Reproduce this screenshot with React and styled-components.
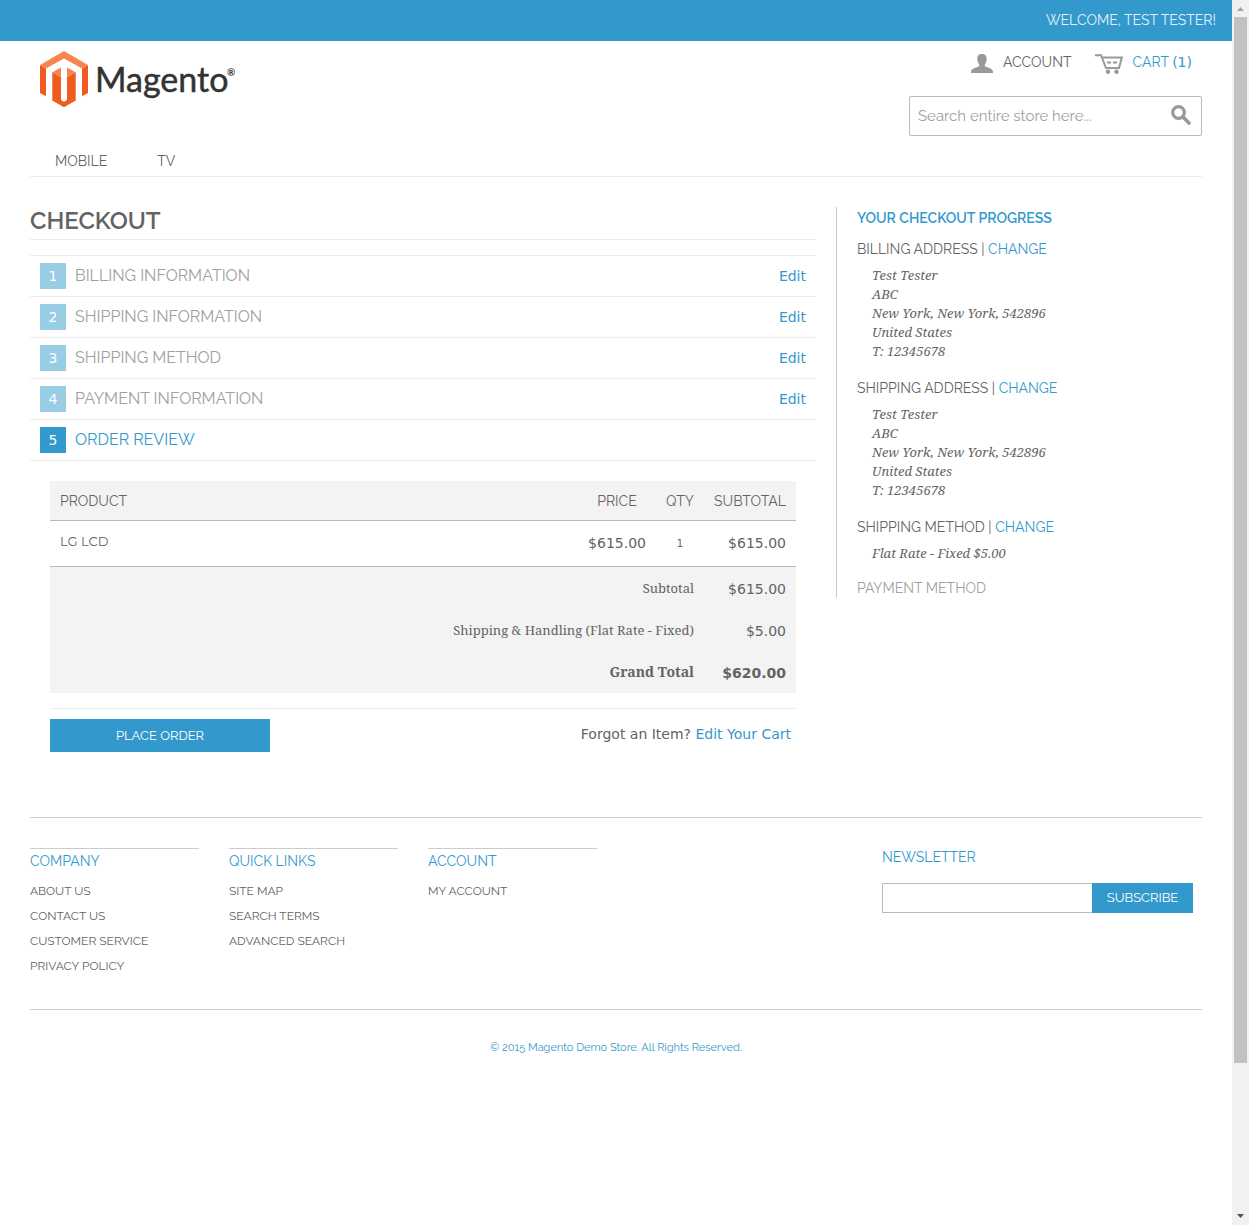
import React from "react";
import styled, { createGlobalStyle, css } from "styled-components";

const blue = "#3399cc";
const text = "#636363";
const muted = "#a0a0a0";
const rule = "#ededed";
const line = "#cccccc";
const strong = "#bbbbbb";

const display = `Raleway, Lato, sans-serif`;
const sans = `Verdana, "DejaVu Sans", sans-serif`;
const serif = `Georgia, "Noto Serif", "Liberation Serif", serif`;

const GlobalStyle = createGlobalStyle`
  *, *::before, *::after { box-sizing: border-box; }
  html { scrollbar-width: none; }
  body {
    margin: 0;
    background: #fff;
    color: ${text};
    font: 14px/20px ${display};
  }
  h1, h2, h3, h4, p, dl, dd, ol, ul, address { margin: 0; padding: 0; }
  ol, ul { list-style: none; }
  button, input { font: inherit; border-radius: 0; margin: 0; }
`;

const Window = styled.div`
  display: flex;
  min-height: 100vh;
`;

const Page = styled.div`
  flex: 1;
  min-width: 0;
`;

const ScrollTrack = styled.div`
  flex: 0 0 17px;
  height: 100vh;
  background: #f1f1f1;
  display: flex;
  flex-direction: column;
  align-items: center;
`;

const ScrollArrow = styled.svg`
  flex: 0 0 17px;
  width: 17px;
`;

const ScrollThumb = styled.div`
  flex: 36;
  width: 13px;
  background: #c1c1c1;
`;

const ScrollRest = styled.div`
  flex: 5;
`;

const WelcomeBar = styled.div`
  background: ${blue};
  color: #e6f1f8;
  text-align: right;
  text-transform: uppercase;
  padding: 10px 16px 11px;
`;

const Container = styled.div`
  padding: 0 30px;
`;

const Header = styled.header`
  display: flex;
  justify-content: space-between;
  align-items: flex-start;
  padding: 10px 0 0 10px;
  height: 105px;
`;

const LogoLink = styled.a`
  display: block;
  line-height: 0;
`;

const HeaderTools = styled.div`
  width: 293px;
  display: flex;
  flex-direction: column;
  gap: 23px;
`;

const AccountLinks = styled.nav`
  display: flex;
  justify-content: flex-end;
  gap: 24px;
  padding-right: 10px;
`;

const IconLink = styled.a`
  display: flex;
  align-items: center;
  gap: ${(p) => (p.$accent ? 9 : 10)}px;
  height: 22px;
  color: ${(p) => (p.$accent ? blue : text)};
  text-transform: uppercase;
  text-decoration: none;
  svg { margin-top: 3px; }
`;

const Count = styled.span`
  font-family: ${sans};
`;

const SearchForm = styled.form`
  display: flex;
  align-items: center;
  height: 40px;
  border: 1px solid ${strong};
  border-radius: 2px;
`;

const SearchInput = styled.input`
  flex: 1;
  min-width: 0;
  height: 38px;
  padding: 0 8px;
  border: 0;
  outline: 0;
  background: transparent;
  font-size: 15px;
  color: ${text};
  &::placeholder { color: #a0a0a0; opacity: 1; }
`;

const SearchButton = styled.button`
  width: 40px;
  height: 38px;
  padding: 0 0 2px;
  border: 0;
  background: transparent;
  line-height: 0;
`;

const MainNav = styled.nav`
  display: flex;
  gap: 50px;
  padding: 5px 25px;
  border-bottom: 1px solid ${rule};
`;

const NavLink = styled.a`
  color: ${text};
  text-transform: uppercase;
  text-decoration: none;
`;

const Content = styled.div`
  display: flex;
  align-items: flex-start;
  gap: 20px;
  padding-top: 30px;
`;

const Main = styled.main`
  flex: 1;
  min-width: 0;
`;

const PageTitle = styled.h1`
  font-size: 24px;
  line-height: 28px;
  font-weight: 600;
  text-transform: uppercase;
  padding-bottom: 4px;
  border-bottom: 1px solid ${rule};
  margin-bottom: 15px;
`;

const Steps = styled.ol`
  border-top: 1px solid ${rule};
`;

const StepHead = styled.div`
  display: flex;
  align-items: center;
  gap: 9px;
  height: 41px;
  padding: 0 10px;
  border-bottom: 1px solid ${rule};
`;

const StepNumber = styled.span`
  width: 26px;
  height: 26px;
  background: ${(p) => (p.$active ? blue : "#99cce5")};
  color: #fff;
  font: 14px/26px ${sans};
  text-align: center;
`;

const StepTitle = styled.h2`
  flex: 1;
  font-size: 16px;
  font-weight: 400;
  text-transform: uppercase;
  color: ${(p) => (p.$active ? blue : muted)};
`;

const TextLink = styled.a`
  color: ${blue};
  text-decoration: none;
`;

const EditLink = styled(TextLink)`
  font-family: ${sans};
`;

const Review = styled.section`
  padding: 20px;
`;

const Table = styled.table`
  width: 100%;
  border-collapse: separate;
  border-spacing: 0;
`;

const HeadCell = styled.th`
  height: 40px;
  padding: 0 10px;
  background: #f3f3f3;
  border-bottom: 1px solid ${strong};
  font-weight: 400;
  text-transform: uppercase;
  text-align: ${(p) => p.$align || "left"};
  width: ${(p) => p.$width || "auto"};
`;

const BodyCell = styled.td`
  height: 46px;
  padding: 0 10px 2px;
  border-bottom: 1px solid ${strong};
  text-align: ${(p) => p.$align || "left"};
  font-family: ${sans};
`;

const ProductName = styled.h3`
  padding-bottom: 4px;
  font: 400 13px/20px Montserrat, "Open Sans", sans-serif;
  text-transform: uppercase;
`;

const Quantity = styled.span`
  font-size: 10px;
`;

const totalCell = css`
  height: 42px;
  background: #f3f3f3;
  text-align: right;
  font-weight: ${(p) => (p.$grand ? 700 : 400)};
`;

const TotalLabel = styled.th`
  ${totalCell}
  padding: 0 10px;
  font-family: ${serif};
  font-size: ${(p) => (p.$grand ? 14 : 13)}px;
`;

const TotalValue = styled.td`
  ${totalCell}
  padding: 2px 10px 0;
  font-family: ${sans};
`;

const Actions = styled.div`
  display: flex;
  justify-content: space-between;
  align-items: flex-start;
  margin-top: 15px;
  padding-top: 10px;
  border-top: 1px solid ${rule};
`;

const Button = styled.button`
  border: 0;
  background: ${blue};
  color: #fff;
  text-transform: uppercase;
  font-size: 13px;
  width: ${(p) => p.$width}px;
  height: ${(p) => p.$height}px;
  padding: 0;
`;

const Forgot = styled.p`
  padding: 5px 5px 0 0;
  font-family: ${sans};
`;

const Sidebar = styled.aside`
  width: 366px;
  border-left: 1px solid ${line};
  padding-left: 20px;
`;

const SideTitle = styled.h2`
  font-size: 14px;
  line-height: 22px;
  font-weight: 600;
  color: ${blue};
  text-transform: uppercase;
  margin-bottom: 10px;
`;

const Progress = styled.dl`
  display: flex;
  flex-direction: column;
`;

const ProgressTerm = styled.dt`
  text-transform: uppercase;
  color: ${(p) => (p.$pending ? muted : text)};
`;

const ProgressDetail = styled.dd`
  padding: 7px 0 15px 15px;
  font: italic 13px/19px ${serif};
`;

const Address = styled.address`
  font-style: italic;
  padding-bottom: 2px;
`;

const Footer = styled.footer`
  margin-top: 45px;
  border-top: 1px solid ${line};
`;

const FooterTop = styled.div`
  display: flex;
  justify-content: space-between;
  padding: 30px 0;
  border-bottom: 1px solid ${line};
`;

const FooterColumns = styled.div`
  display: flex;
  gap: 30px;
`;

const FooterColumn = styled.div`
  width: 169px;
  border-top: 1px solid ${line};
`;

const FooterTitle = styled.h4`
  font-size: 14px;
  line-height: 24px;
  font-weight: 400;
  color: ${blue};
  text-transform: uppercase;
  margin-bottom: 6px;
`;

const FooterLink = styled.a`
  display: block;
  font-size: 12px;
  line-height: 25px;
  color: ${text};
  text-transform: uppercase;
  text-decoration: none;
`;

const Newsletter = styled.form`
  width: 320px;
  padding-right: 9px;
`;

const NewsletterLabel = styled.label`
  display: block;
  line-height: 18px;
  color: ${blue};
  text-transform: uppercase;
  margin-bottom: 17px;
`;

const NewsletterRow = styled.div`
  display: flex;
`;

const NewsletterInput = styled.input`
  flex: 1;
  min-width: 0;
  height: 30px;
  border: 1px solid ${strong};
  border-right: 0;
  padding: 0 8px;
`;

const Copyright = styled.p`
  padding: 28px 0;
  font-size: 11px;
  text-align: center;
  color: ${blue};
`;

const Logo = () => (
  <svg width="200" height="58" viewBox="0 0 200 58" role="img" aria-label="Magento">
    <path fill="#f15b22" d="M0 14 6 17.500V45.300L0 42ZM48 14 42 17.500V45.300L48 42ZM12.300 21.300 21 26V49L24 51 27 49V26L35.700 21.300V49.500L24 56.300 12.300 49.500Z" />
    <path fill="#f68650" d="M24 0 48 14 42 17.500 24 7.500 6 17.500 0 14ZM12.300 21.300 21 16.400V26ZM35.700 21.300 27 16.400V26Z" />
    <text x="55" y="41" fontFamily="Lato" fontSize="34" fill="#333" stroke="#333" strokeWidth=".5">Magento</text>
    <text x="187" y="25" fontFamily="Lato" fontWeight="700" fontSize="10" fill="#333">®</text>
  </svg>
);

const AccountIcon = () => (
  <svg width="22" height="19" viewBox="0 0 22 19" aria-hidden="true">
    <path fill="#999" d="M11 0c3.300 0 5 2 4.700 5.200C15.500 8 14.600 9.500 13.800 10.500v1.500c1.200 1.600 8.200 2 8.200 5.800V19H0v-1.200c0-3.800 7-4.200 8.200-5.800v-1.500C7.400 9.500 6.500 8 6.300 5.200 6 2 7.700 0 11 0Z" />
  </svg>
);

const CartIcon = () => (
  <svg width="28" height="20" viewBox="0 0 28 20" aria-hidden="true">
    <path d="M0 1.200H6L11 14H24L26.800 3.500H7.500" fill="none" stroke="#999" strokeWidth="2" />
    <path d="M12 8.500h4m2 0h4" stroke="#999" strokeWidth="2" />
    <circle cx="13" cy="17.700" r="2.200" fill="#999" />
    <circle cx="21.500" cy="17.700" r="2.200" fill="#999" />
  </svg>
);

const SearchIcon = () => (
  <svg width="20" height="20" viewBox="0 0 20 20" aria-hidden="true">
    <circle cx="7.500" cy="7.500" r="5.800" fill="none" stroke="#999" strokeWidth="3.200" />
    <path d="m12 12 6 6" stroke="#999" strokeWidth="3.600" strokeLinecap="round" />
  </svg>
);

const steps = [
  "Billing Information",
  "Shipping Information",
  "Shipping Method",
  "Payment Information",
  "Order Review",
];

const totals = [
  ["Subtotal", "$615.00"],
  ["Shipping & Handling (Flat Rate - Fixed)", "$5.00"],
  ["Grand Total", "$620.00"],
];

const addressLines = ["Test Tester", "ABC", "New York, New York, 542896", "United States", "T: 12345678"];

const footerColumns = [
  ["Company", ["About Us", "Contact Us", "Customer Service", "Privacy Policy"]],
  ["Quick Links", ["Site Map", "Search Terms", "Advanced Search"]],
  ["Account", ["My Account"]],
];

const AddressBlock = () => (
  <Address>
    {addressLines.map((l) => (
      <div key={l}>{l}</div>
    ))}
  </Address>
);

const ProgressHeading = ({ children }) => (
  <ProgressTerm>
    {children} | <TextLink href="#change">Change</TextLink>
  </ProgressTerm>
);

export default function App() {
  return (
    <Window>
      <GlobalStyle />
      <Page>
        <WelcomeBar>Welcome, Test Tester!</WelcomeBar>
        <Container>
          <Header>
            <LogoLink href="#home"><Logo /></LogoLink>
            <HeaderTools>
              <AccountLinks>
                <IconLink href="#account"><AccountIcon />Account</IconLink>
                <IconLink href="#cart" $accent>
                  <CartIcon />
                  <span>Cart <Count>(1)</Count></span>
                </IconLink>
              </AccountLinks>
              <SearchForm>
                <SearchInput type="search" aria-label="Search" placeholder="Search entire store here..." />
                <SearchButton type="button" aria-label="Search"><SearchIcon /></SearchButton>
              </SearchForm>
            </HeaderTools>
          </Header>
          <MainNav>
            <NavLink href="#mobile">Mobile</NavLink>
            <NavLink href="#tv">TV</NavLink>
          </MainNav>

          <Content>
            <Main>
              <PageTitle>Checkout</PageTitle>
              <Steps>
                {steps.map((title, i) => {
                  const active = i === steps.length - 1;
                  return (
                    <li key={title}>
                      <StepHead>
                        <StepNumber $active={active}>{i + 1}</StepNumber>
                        <StepTitle $active={active}>{title}</StepTitle>
                        {!active && <EditLink href="#edit">Edit</EditLink>}
                      </StepHead>
                    </li>
                  );
                })}
              </Steps>
              <Review>
                <Table>
                  <thead>
                    <tr>
                      <HeadCell>Product</HeadCell>
                      <HeadCell $align="center" $width="78px">Price</HeadCell>
                      <HeadCell $align="center" $width="48px">Qty</HeadCell>
                      <HeadCell $align="center" $width="92px">Subtotal</HeadCell>
                    </tr>
                  </thead>
                  <tbody>
                    <tr>
                      <BodyCell><ProductName>LG LCD</ProductName></BodyCell>
                      <BodyCell $align="right">$615.00</BodyCell>
                      <BodyCell $align="center"><Quantity>1</Quantity></BodyCell>
                      <BodyCell $align="right">$615.00</BodyCell>
                    </tr>
                  </tbody>
                  <tfoot>
                    {totals.map(([label, value], i) => (
                      <tr key={label}>
                        <TotalLabel scope="row" colSpan={3} $grand={i === 2}>{label}</TotalLabel>
                        <TotalValue $grand={i === 2}>{value}</TotalValue>
                      </tr>
                    ))}
                  </tfoot>
                </Table>
                <Actions>
                  <Button type="button" $width={220} $height={33}>Place Order</Button>
                  <Forgot>Forgot an Item? <TextLink href="#cart">Edit Your Cart</TextLink></Forgot>
                </Actions>
              </Review>
            </Main>

            <Sidebar>
              <SideTitle>Your Checkout Progress</SideTitle>
              <Progress>
                <ProgressHeading>Billing Address</ProgressHeading>
                <ProgressDetail><AddressBlock /></ProgressDetail>
                <ProgressHeading>Shipping Address</ProgressHeading>
                <ProgressDetail><AddressBlock /></ProgressDetail>
                <ProgressHeading>Shipping Method</ProgressHeading>
                <ProgressDetail>Flat Rate - Fixed $5.00</ProgressDetail>
                <ProgressTerm $pending>Payment Method</ProgressTerm>
              </Progress>
            </Sidebar>
          </Content>

          <Footer>
            <FooterTop>
              <FooterColumns>
                {footerColumns.map(([title, links]) => (
                  <FooterColumn key={title}>
                    <FooterTitle>{title}</FooterTitle>
                    <ul>
                      {links.map((l) => (
                        <li key={l}><FooterLink href="#link">{l}</FooterLink></li>
                      ))}
                    </ul>
                  </FooterColumn>
                ))}
              </FooterColumns>
              <Newsletter>
                <NewsletterLabel htmlFor="newsletter">Newsletter</NewsletterLabel>
                <NewsletterRow>
                  <NewsletterInput id="newsletter" type="email" />
                  <Button type="button" $width={101} $height={30}>Subscribe</Button>
                </NewsletterRow>
              </Newsletter>
            </FooterTop>
            <Copyright>© 2015 Magento Demo Store. All Rights Reserved.</Copyright>
          </Footer>
        </Container>
      </Page>
      <ScrollTrack aria-hidden="true">
        <ScrollArrow viewBox="0 0 17 17"><path d="M5 11h7L8.500 7Z" fill="#a3a3a3" /></ScrollArrow>
        <ScrollThumb />
        <ScrollRest />
        <ScrollArrow viewBox="0 0 17 17"><path d="M5 6h7L8.500 10Z" fill="#505050" /></ScrollArrow>
      </ScrollTrack>
    </Window>
  );
}
